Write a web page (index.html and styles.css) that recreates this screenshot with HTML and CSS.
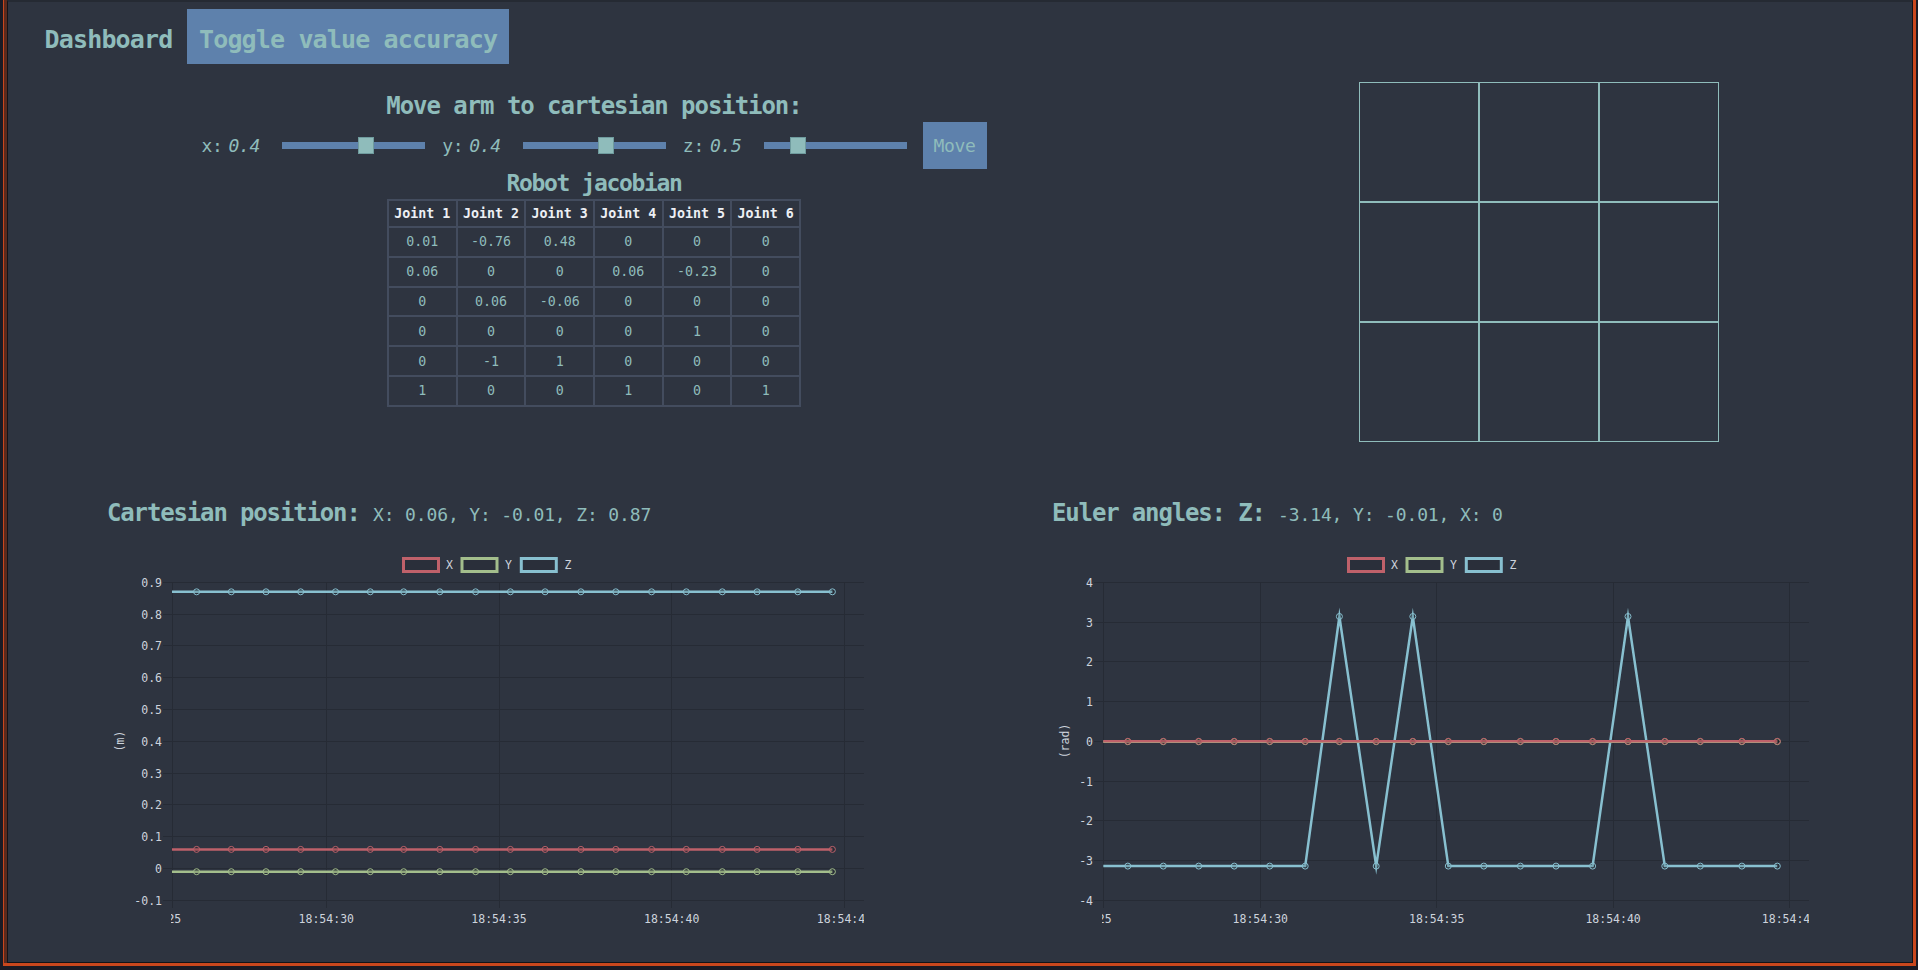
FILE: index.html
```html
<!DOCTYPE html>
<html lang="en">
<head>
<meta charset="utf-8">
<title>Dashboard</title>
<link rel="stylesheet" href="styles.css">
</head>
<body>
<div class="frame">
 <div class="frame-inner">
  <div class="page">
   <header class="header">
    <span class="brand">Dashboard</span>
    <button class="toggle">Toggle value accuracy</button>
   </header>

   <section class="top">
    <div class="control">
     <h2 class="title">Move arm to cartesian position:</h2>
     <div class="sliders">
      <span class="lbl">x:</span><span class="lbl val">0.4</span>
      <input type="range" class="rng" min="0" max="1" step="0.001" value="0.597">
      <span class="lbl">y:</span><span class="lbl val">0.4</span>
      <input type="range" class="rng" min="0" max="1" step="0.001" value="0.594">
      <span class="lbl">z:</span><span class="lbl val">0.5</span>
      <input type="range" class="rng last" min="0" max="1" step="0.001" value="0.205">
      <button class="move">Move</button>
     </div>
     <h3 class="jac-title">Robot jacobian</h3>
     <table class="jac">
      <thead>
       <tr><th>Joint 1</th><th>Joint 2</th><th>Joint 3</th><th>Joint 4</th><th>Joint 5</th><th>Joint 6</th></tr>
      </thead>
      <tbody>
       <tr><td>0.01</td><td>-0.76</td><td>0.48</td><td>0</td><td>0</td><td>0</td></tr>
       <tr><td>0.06</td><td>0</td><td>0</td><td>0.06</td><td>-0.23</td><td>0</td></tr>
       <tr><td>0</td><td>0.06</td><td>-0.06</td><td>0</td><td>0</td><td>0</td></tr>
       <tr><td>0</td><td>0</td><td>0</td><td>0</td><td>1</td><td>0</td></tr>
       <tr><td>0</td><td>-1</td><td>1</td><td>0</td><td>0</td><td>0</td></tr>
       <tr><td>1</td><td>0</td><td>0</td><td>1</td><td>0</td><td>1</td></tr>
      </tbody>
     </table>
    </div>
    <div class="board-wrap">
     <div class="board">
      <div></div><div></div><div></div>
      <div></div><div></div><div></div>
      <div></div><div></div><div></div>
     </div>
    </div>
   </section>

   <section class="charts">
    <div class="chart">
     <h2 class="chart-title">Cartesian position: <span class="v">X: 0.06, Y: -0.01, Z: 0.87</span></h2>
     <svg class="plot" width="757" height="400" viewBox="0 0 757 400">
      <defs>
       <clipPath id="cpL"><rect x="65" y="30" width="692" height="350"/></clipPath>
       <clipPath id="cxL"><rect x="64" y="378" width="693" height="22"/></clipPath>
       <marker id="mX" class="mk" markerWidth="10" markerHeight="10" refX="5" refY="5" markerUnits="userSpaceOnUse"><circle cx="5" cy="5" r="3" fill="rgba(0,0,0,0.12)" stroke="#bf616a" stroke-width="1"/></marker>
       <marker id="mY" class="mk" markerWidth="10" markerHeight="10" refX="5" refY="5" markerUnits="userSpaceOnUse"><circle cx="5" cy="5" r="3" fill="rgba(0,0,0,0.12)" stroke="#a3be8c" stroke-width="1"/></marker>
       <marker id="mZ" class="mk" markerWidth="10" markerHeight="10" refX="5" refY="5" markerUnits="userSpaceOnUse"><circle cx="5" cy="5" r="3" fill="rgba(0,0,0,0.12)" stroke="#88c0d0" stroke-width="1"/></marker>
      </defs>
      <g class="legend">
       <rect x="296.5" y="29.5" width="35" height="13" class="lg-x"/>
       <text x="339" y="36">X</text>
       <rect x="355" y="29.5" width="35" height="13" class="lg-y"/>
       <text x="398" y="36">Y</text>
       <rect x="414.3" y="29.5" width="35" height="13" class="lg-z"/>
       <text x="457.6" y="36">Z</text>
      </g>
      <path class="gl" d="M56 53.5H757M56 85.5H757M56 116.5H757M56 148.5H757M56 180.5H757M56 212.5H757M56 244.5H757M56 275.5H757M56 307.5H757M56 339.5H757M56 371.5H757"/>
      <path class="gl" d="M65.5 53.5V379M219.5 53.5V379M392.5 53.5V379M564.5 53.5V379M737.5 53.5V379"/>
      <g class="tick" text-anchor="end">
       <text x="55" y="53.5">0.9</text>
       <text x="55" y="85.5">0.8</text>
       <text x="55" y="116.5">0.7</text>
       <text x="55" y="148.5">0.6</text>
       <text x="55" y="180.5">0.5</text>
       <text x="55" y="212.5">0.4</text>
       <text x="55" y="244.5">0.3</text>
       <text x="55" y="275.5">0.2</text>
       <text x="55" y="307.5">0.1</text>
       <text x="55" y="339.5">0</text>
       <text x="55" y="371.5">-0.1</text>
      </g>
      <g class="tick" text-anchor="middle" clip-path="url(#cxL)">
       <text x="46.6" y="390">18:54:25</text>
       <text x="219.3" y="390">18:54:30</text>
       <text x="392" y="390">18:54:35</text>
       <text x="564.7" y="390">18:54:40</text>
       <text x="737.4" y="390">18:54:45</text>
      </g>
      <text class="tick" x="13" y="212" text-anchor="middle" transform="rotate(-90 13 212)">(m)</text>
      <g clip-path="url(#cpL)">
       <polyline class="ln ln-z" marker-start="url(#mZ)" marker-mid="url(#mZ)" marker-end="url(#mZ)" points="54.9,62.8 89.6,62.8 124.3,62.8 159,62.8 193.7,62.8 228.5,62.8 263.3,62.8 296.7,62.8 332.8,62.8 368.6,62.8 403.4,62.8 438.1,62.8 473.9,62.8 508.8,62.8 544.6,62.8 579.3,62.8 615.3,62.8 650.1,62.8 690.8,62.8 725.4,62.8"/>
       <polyline class="ln ln-y" marker-start="url(#mY)" marker-mid="url(#mY)" marker-end="url(#mY)" points="54.9,342.7 89.6,342.7 124.3,342.7 159,342.7 193.7,342.7 228.5,342.7 263.3,342.7 296.7,342.7 332.8,342.7 368.6,342.7 403.4,342.7 438.1,342.7 473.9,342.7 508.8,342.7 544.6,342.7 579.3,342.7 615.3,342.7 650.1,342.7 690.8,342.7 725.4,342.7"/>
       <polyline class="ln ln-x" marker-start="url(#mX)" marker-mid="url(#mX)" marker-end="url(#mX)" points="54.9,320.4 89.6,320.4 124.3,320.4 159,320.4 193.7,320.4 228.5,320.4 263.3,320.4 296.7,320.4 332.8,320.4 368.6,320.4 403.4,320.4 438.1,320.4 473.9,320.4 508.8,320.4 544.6,320.4 579.3,320.4 615.3,320.4 650.1,320.4 690.8,320.4 725.4,320.4"/>
      </g>
     </svg>
    </div>

    <div class="chart">
     <h2 class="chart-title">Euler angles: Z: <span class="v">-3.14, Y: -0.01, X: 0</span></h2>
     <svg class="plot" width="757" height="400" viewBox="0 0 757 400">
      <defs>
       <clipPath id="cpR"><rect x="51.3" y="30" width="705.4" height="350"/></clipPath>
       <clipPath id="cxR"><rect x="50" y="378" width="707" height="22"/></clipPath>
      </defs>
      <g class="legend">
       <rect x="296.5" y="29.5" width="35" height="13" class="lg-x"/>
       <text x="339" y="36">X</text>
       <rect x="355" y="29.5" width="35" height="13" class="lg-y"/>
       <text x="398" y="36">Y</text>
       <rect x="414.3" y="29.5" width="35" height="13" class="lg-z"/>
       <text x="457.6" y="36">Z</text>
      </g>
      <path class="gl" d="M42 53.5H757M42 93.5H757M42 132.5H757M42 172.5H757M42 212.5H757M42 252.5H757M42 291.5H757M42 331.5H757M42 371.5H757"/>
      <path class="gl" d="M51.5 53.5V379M208.5 53.5V379M384.5 53.5V379M561.5 53.5V379M737.5 53.5V379"/>
      <g class="tick" text-anchor="end">
       <text x="41" y="53.5">4</text>
       <text x="41" y="93.5">3</text>
       <text x="41" y="132.5">2</text>
       <text x="41" y="172.5">1</text>
       <text x="41" y="212.5">0</text>
       <text x="41" y="252.5">-1</text>
       <text x="41" y="291.5">-2</text>
       <text x="41" y="331.5">-3</text>
       <text x="41" y="371.5">-4</text>
      </g>
      <g class="tick" text-anchor="middle" clip-path="url(#cxR)">
       <text x="31.9" y="390">18:54:25</text>
       <text x="208.3" y="390">18:54:30</text>
       <text x="384.7" y="390">18:54:35</text>
       <text x="561.1" y="390">18:54:40</text>
       <text x="737.5" y="390">18:54:45</text>
      </g>
      <text class="tick" x="13" y="212" text-anchor="middle" transform="rotate(-90 13 212)">(rad)</text>
      <g clip-path="url(#cpR)">
       <polyline class="ln ln-z" marker-start="url(#mZ)" marker-mid="url(#mZ)" marker-end="url(#mZ)" points="40.4,337.1 75.8,337.1 111.3,337.1 146.7,337.1 182.2,337.1 217.7,337.1 253.2,337.1 287.4,87.5 324.2,337.1 360.8,87.5 396.3,337.1 431.8,337.1 468.4,337.1 504,337.1 540.6,337.1 576,87.5 612.8,337.1 648.3,337.1 689.9,337.1 725.3,337.1"/>
       <polyline class="ln ln-y" marker-start="url(#mY)" marker-mid="url(#mY)" marker-end="url(#mY)" points="40.4,212.7 75.8,212.7 111.3,212.7 146.7,212.7 182.2,212.7 217.7,212.7 253.2,212.7 287.4,212.7 324.2,212.7 360.8,212.7 396.3,212.7 431.8,212.7 468.4,212.7 504,212.7 540.6,212.7 576,212.7 612.8,212.7 648.3,212.7 689.9,212.7 725.3,212.7"/>
       <polyline class="ln ln-x" marker-start="url(#mX)" marker-mid="url(#mX)" marker-end="url(#mX)" points="40.4,212.3 75.8,212.3 111.3,212.3 146.7,212.3 182.2,212.3 217.7,212.3 253.2,212.3 287.4,212.3 324.2,212.3 360.8,212.3 396.3,212.3 431.8,212.3 468.4,212.3 504,212.3 540.6,212.3 576,212.3 612.8,212.3 648.3,212.3 689.9,212.3 725.3,212.3"/>
      </g>
     </svg>
    </div>
   </section>
  </div>
 </div>
</div>
</body>
</html>
```

FILE: styles.css
```css
* { box-sizing: border-box; }

html, body {
  margin: 0;
  height: 970px;
  overflow: hidden;
}

body {
  background: #1a1b25;
  font-family: "DejaVu Sans Mono", monospace;
  color: #8fbcbb;
}

.frame {
  height: 966px;
  margin: 0 2px 0 3px;
  border-style: solid;
  border-color: #c9471d;
  border-width: 0 3px 3px 1px;
}

.frame-inner {
  height: 100%;
  border-left: 3px solid #5b2a1e;
}

.page {
  height: 100%;
  background: #2e3440;
  border-style: solid;
  border-color: #252a33 #121419 #121419 #121419;
  border-width: 2px 1px 1px 1px;
}

/* header */
.header {
  display: flex;
  align-items: center;
  gap: 14.6px;
  padding: 7px 0 0 36.6px;
}

.brand {
  padding-top: 5px;
  font-size: 25px;
  font-weight: bold;
  letter-spacing: -0.85px;
}

.toggle {
  height: 55px;
  padding: 5px 12px 0;
  border: 0;
  background: #5e81ac;
  color: #8fbcbb;
  font-family: "DejaVu Sans Mono", monospace;
  font-size: 25px;
  font-weight: bold;
  letter-spacing: -0.85px;
}

/* top section */
.top {
  display: flex;
  align-items: flex-start;
}

.control {
  width: 1172px;
  display: flex;
  flex-direction: column;
  align-items: center;
}

.title {
  margin: 27px 0 0;
  font-size: 24px;
  line-height: 30px;
  letter-spacing: -1.05px;
}

.sliders {
  display: flex;
  align-items: center;
  height: 47px;
  margin-top: 1px;
}

.lbl {
  font-size: 18px;
  letter-spacing: -0.3px;
}

.val {
  font-style: italic;
  margin-left: 6px;
  margin-right: 22px;
}

.rng {
  -webkit-appearance: none;
  appearance: none;
  width: 143px;
  height: 17px;
  margin: 0 17px 0 0;
  background: transparent;
}

.rng.last { margin-right: 16px; }

.rng::-webkit-slider-runnable-track {
  height: 7px;
  background: #5e81ac;
  border: 0;
}

.rng::-webkit-slider-thumb {
  -webkit-appearance: none;
  appearance: none;
  width: 16px;
  height: 17px;
  margin-top: -5px;
  background: #8fbcbb;
  border: 1px solid #6f9b9e;
  border-radius: 0;
}

.move {
  width: 64px;
  height: 47px;
  padding: 0;
  border: 0;
  background: #5e81ac;
  color: #8fbcbb;
  font-family: "DejaVu Sans Mono", monospace;
  font-size: 18px;
  letter-spacing: -0.3px;
}

.jac-title {
  margin: 0;
  font-size: 23px;
  line-height: 28px;
  letter-spacing: -1.35px;
}

.jac {
  margin-top: 2px;
  width: 414px;
  table-layout: fixed;
  border-collapse: separate;
  border-spacing: 0;
  border: 1px solid #434c5e;
  font-size: 13.3px;
}

.jac th, .jac td {
  border: 1px solid #434c5e;
  text-align: center;
  padding: 0;
}

.jac th {
  height: 27px;
  color: #eceff4;
  font-weight: bold;
}

.jac td {
  height: 29.8px;
  color: #8fbcbb;
}

.board-wrap {
  width: 718px;
  display: flex;
  justify-content: center;
  padding-top: 18px;
}

.board {
  width: 360px;
  height: 360px;
  display: grid;
  grid-template-columns: repeat(3, 120px);
  grid-template-rows: repeat(3, 120px);
}

.board div {
  border: 1px solid #8fbcbb;
}

/* charts */
.charts {
  display: flex;
  gap: 188px;
  padding-left: 99px;
  margin-top: 57px;
}

.chart {
  width: 757px;
}

.chart-title {
  margin: 0;
  font-size: 24px;
  line-height: 28px;
  letter-spacing: -1.15px;
  white-space: nowrap;
}

.chart-title .v {
  font-size: 18px;
  font-weight: normal;
  letter-spacing: -0.14px;
}

.plot {
  display: block;
  overflow: hidden;
}

.plot text {
  font-family: "DejaVu Sans Mono", monospace;
  font-size: 11.5px;
  fill: #cdd3dc;
  dominant-baseline: central;
}

.gl {
  fill: none;
  stroke: #262b35;
  stroke-width: 1;
}

.legend rect {
  fill: #2a2f3a;
  stroke-width: 3;
}

.lg-x { stroke: #bf616a; }
.lg-y { stroke: #a3be8c; }
.lg-z { stroke: #88c0d0; }

.ln {
  fill: none;
  stroke-width: 2.5;
  stroke-linejoin: miter;
  stroke-miterlimit: 10;
}

.ln-x { stroke: #bf616a; }
.ln-y { stroke: #a3be8c; }
.ln-z { stroke: #88c0d0; }

.mk { overflow: visible; }
```
